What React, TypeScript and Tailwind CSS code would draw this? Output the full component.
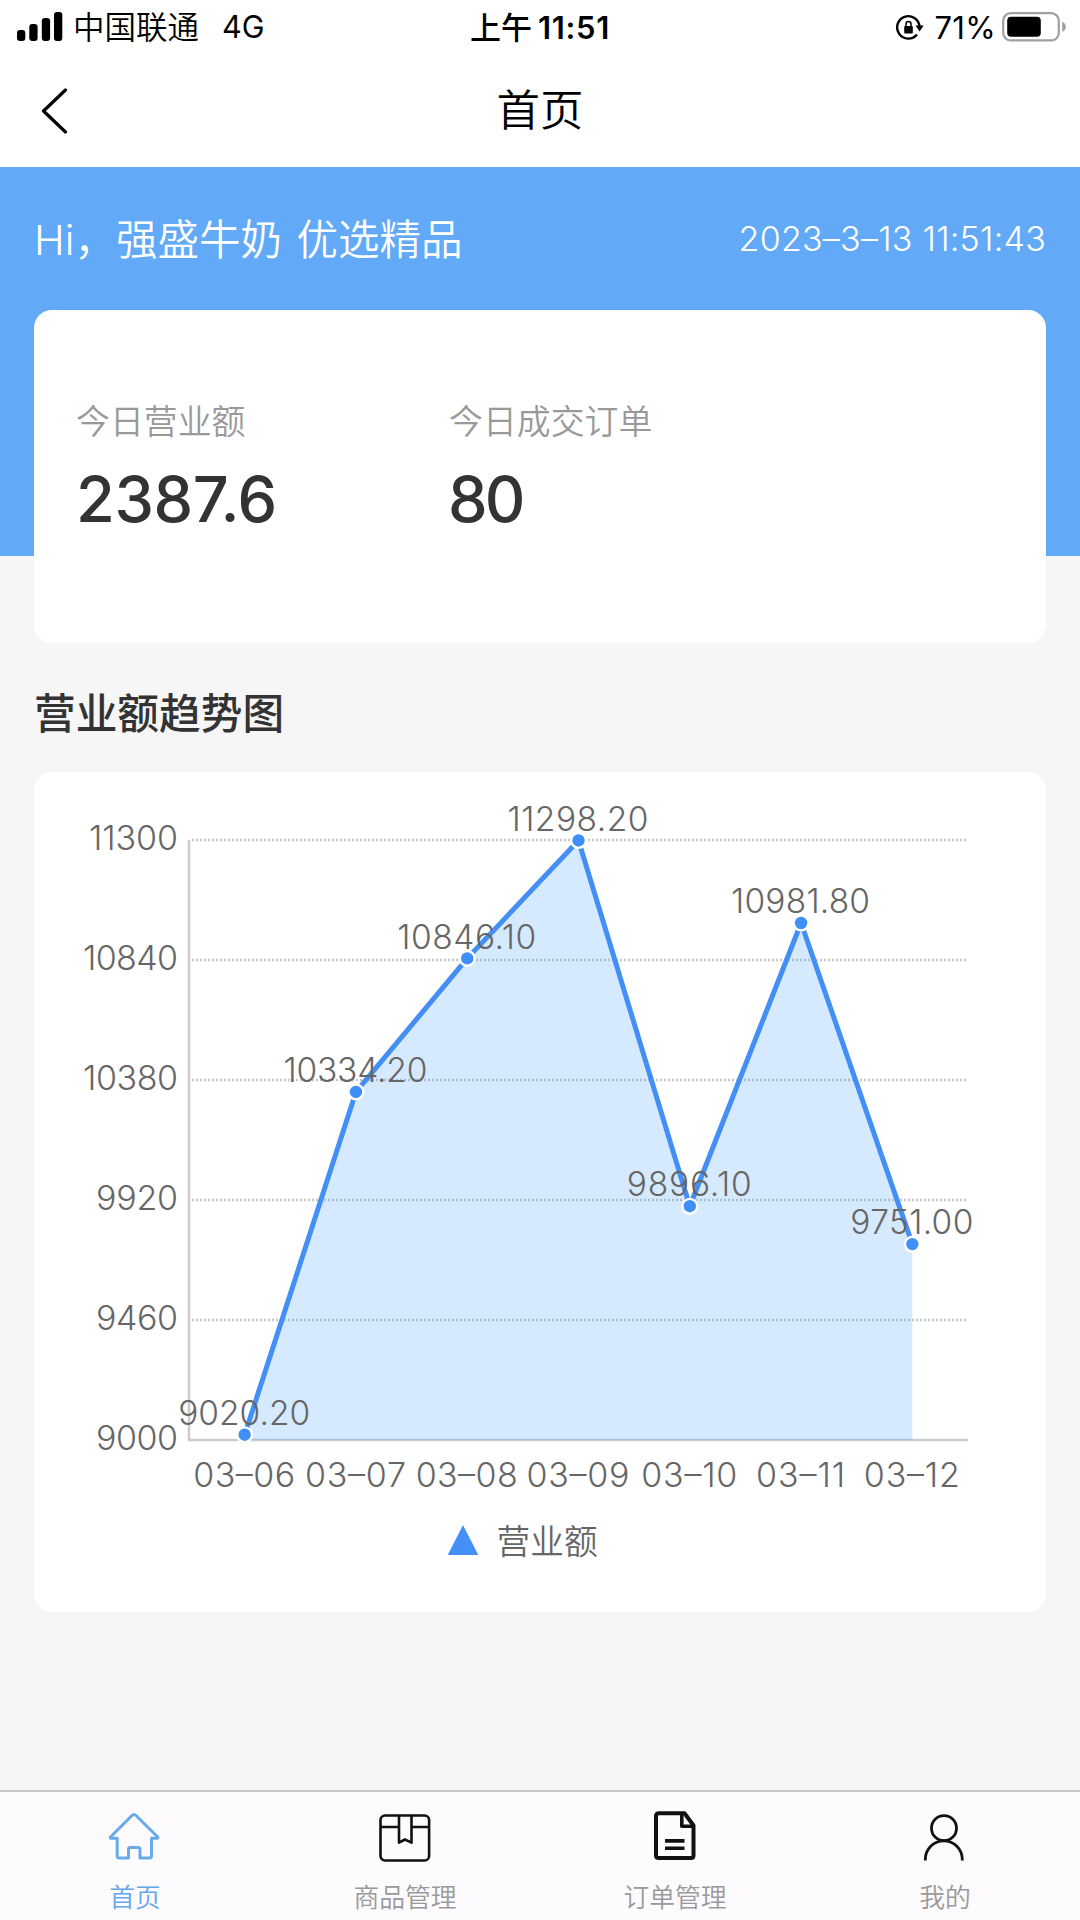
import React from "react";

const points = [
  { day: "03–06", value: 9020.2, width: 129, dayWidth: 99 },
  { day: "03–07", value: 10334.2, width: 141, dayWidth: 98 },
  { day: "03–08", value: 10846.1, width: 136, dayWidth: 99 },
  { day: "03–09", value: 11298.2, width: 138, dayWidth: 100 },
  { day: "03–10", value: 9896.1, width: 122, dayWidth: 93 },
  { day: "03–11", value: 10981.8, width: 136, dayWidth: 86 },
  { day: "03–12", value: 9751, width: 120, dayWidth: 93 },
];
const ticks = [
  { value: 11300, width: 89 },
  { value: 10840, width: 95 },
  { value: 10380, width: 95 },
  { value: 9920, width: 82 },
  { value: 9460, width: 82 },
  { value: 9000, width: 82 },
];

// Plot area inside the 1012 x 840 chart card
const LEFT = 155;
const RIGHT = 934;
const TOP = 68;
const BOTTOM = 668;
const STEP = (RIGHT - LEFT) / points.length;
const px = (i: number) => LEFT + STEP * (i + 0.5);
const py = (v: number) => BOTTOM - ((v - 9000) / 2300) * (BOTTOM - TOP);

function StatusBar() {
  return (
    <div className="grid h-[54px] grid-cols-3 items-center text-[30px] leading-none text-black">
      <div className="flex items-center pl-[17px]">
        <svg width="46" height="30" viewBox="0 0 46 30" fill="#000">
          <rect x="0" y="18" width="8.3" height="11" rx="3" />
          <rect x="12.3" y="12" width="8.3" height="17" rx="3" />
          <rect x="24.8" y="6" width="8.3" height="23" rx="3" />
          <rect x="37" y="0" width="8.3" height="29" rx="3" />
        </svg>
        <span className="ml-[10px] translate-y-px text-[31.5px] font-[350]">中国联通</span>
        <span className="ml-[23px] text-[30.5px] font-[370]">4G</span>
      </div>
      <div className="flex items-center justify-center gap-[6px] font-semibold">
        <span className="text-[31px] font-medium">上午</span>
        <span className="text-[31px] tracking-[0.7px]">11:51</span>
      </div>
      <div className="flex items-center justify-end pr-[14px]">
        <svg width="30" height="28" viewBox="0 0 30 28" fill="none">
          <path d="M24.5 13.5A11.2 11.2 0 1 0 22 21.5" stroke="#000" strokeWidth="2.4" />
          <path d="M20.5 12.5h8.2l-4.1 6z" fill="#000" />
          <rect x="9.2" y="13" width="8.6" height="7.5" rx="1" fill="#000" />
          <path d="M11 13.5v-2.6a2.5 2.5 0 0 1 5 0v2.6" stroke="#000" strokeWidth="1.5" />
        </svg>
        <span className="ml-[10px] text-[31px] font-[370] tracking-[0.3px]">71%</span>
        <svg className="ml-[6px]" width="64" height="30" viewBox="0 0 64 30">
          <rect x="1.2" y="1.2" width="55.6" height="27.2" rx="7.5" fill="none" stroke="#a0a0a0" strokeWidth="2.2" />
          <rect x="5.2" y="4.8" width="33.6" height="20" rx="4" fill="#000" />
          <path d="M60.2 9.8q3.6 1.5 3.6 5t-3.6 5z" fill="#a0a0a0" />
        </svg>
      </div>
    </div>
  );
}

function NavBar() {
  return (
    <div className="grid h-[113px] grid-cols-3 items-center">
      <svg className="ml-[41px]" width="28" height="46" viewBox="0 0 28 46" fill="none">
        <path d="M24.5 2L2.5 23l22 21" stroke="#000" strokeWidth="3.2" strokeLinecap="round" strokeLinejoin="round" />
      </svg>
      <h1 className="text-center text-[43.5px] leading-none font-[350] text-black">首页</h1>
    </div>
  );
}

function Chart() {
  const line = points.map((p, i) => `${px(i)},${py(p.value)}`).join(" ");
  return (
    <svg className="block" width="1012" height="840" viewBox="0 0 1012 840" fontSize="34">
      {ticks.slice(0, -1).map(({ value }) => (
        <line key={value} x1={LEFT + 3} x2={RIGHT} y1={py(value)} y2={py(value)} stroke="#c8c8c8" strokeWidth="2.4" strokeDasharray="2 2" />
      ))}
      <path d={`M${LEFT} ${TOP}V${BOTTOM}H${RIGHT}`} fill="none" stroke="#cccccc" strokeWidth="2.6" />
      <polygon points={`${px(0)},${BOTTOM} ${line} ${px(6)},${BOTTOM}`} fill="#3296ff" fillOpacity="0.2" />
      <polyline points={line} fill="none" stroke="#448ff5" strokeWidth="5" strokeLinejoin="round" />
      {points.map((p, i) => (
        <circle key={p.day} cx={px(i)} cy={py(p.value)} r="7.4" fill="#3f8ff8" stroke="#fff" strokeWidth="2.4" />
      ))}
      <g fill="#666" className="font-[350]">
        {ticks.map((t) => (
          <text key={t.value} x={144} y={py(t.value) + 10} textAnchor="end" textLength={t.width}>
            {t.value}
          </text>
        ))}
        {points.map((p, i) => (
          <text key={p.day} x={px(i) - 0.5} y={py(p.value) - 9.8} textAnchor="middle" fontSize="33.5" textLength={p.width + 3}>
            {p.value.toFixed(2)}
          </text>
        ))}
        {points.map((p, i) => (
          <text key={p.day} x={px(i) - 0.5} y={714.5} textAnchor="middle" textLength={p.dayWidth + 3}>
            {p.day}
          </text>
        ))}
      </g>
      <path d="M429 753l15.3 30h-30.6z" fill="#448ff8" />
      <text x="462.5" y="781.5" fontSize="33.7" fill="#666" className="font-[350]">
        营业额
      </text>
    </svg>
  );
}

const tabs = [
  {
    label: "首页",
    active: true,
    icon: (
      <path
        d="M23 4.500Q25 2.500 27 4.500L48.700 26Q49.500 27.300 48 27.300H42.500V45Q42.500 47 40.500 47H31V38.300Q31 36.500 29 36.500H21.500Q19.500 36.500 19.500 38.300V47H10.200Q8.200 47 8.200 45V27.300H2.300Q0.500 27.300 1.500 26Z"
        stroke="#67abea"
        strokeWidth="3"
        strokeLinejoin="round"
      />
    ),
  },
  {
    label: "商品管理",
    icon: (
      <g stroke="#111" strokeWidth="2.6" strokeLinejoin="round">
        <rect x="1.5" y="4.500" width="48.6" height="45" rx="4.500" />
        <path d="M1.500 16H20M32.500 16H50.100M20 4.500V31.700L25.900 28.500L32.500 31.700V4.500" />
      </g>
    ),
  },
  {
    label: "订单管理",
    icon: (
      <g stroke="#111" strokeWidth="4" strokeLinejoin="round">
        <path d="M10 2.200H35.500L44.500 14.500V44.500Q44.500 47 42 47H10Q7 47 7 44.500V5Q7 2.200 10 2.200Z" />
        <path d="M32.800 3V15.300H44" strokeWidth="3.600" />
        <path d="M16 29.900H35.500M16 37.200H35.500" strokeWidth="3.600" />
      </g>
    ),
  },
  {
    label: "我的",
    icon: (
      <g stroke="#111" strokeWidth="2.8">
        <circle cx="25" cy="17.200" r="12.500" />
        <path d="M6.300 49.500V48.500A18.500 18.700 0 0 1 43.300 48.500V49.500" />
      </g>
    ),
  },
];

export default function App() {
  return (
    <div className="flex h-[1920px] w-[1080px] flex-col overflow-hidden bg-[#f6f6f6] font-['Inter','Noto_Sans_CJK_SC',sans-serif]">
      <header className="bg-white">
        <StatusBar />
        <NavBar />
      </header>

      <section className="h-[389px] shrink-0 bg-[#62aaf7] px-[34px]">
        <div className="flex h-[143px] items-center justify-between pt-px font-[350] text-white">
          <p className="pt-[3px] text-[41.5px] leading-none [word-spacing:3px]">Hi，强盛牛奶 优选精品</p>
          <time className="text-[34px] leading-none font-[340] tracking-[0.25px]">2023–3–13 11:51:43</time>
        </div>
        <div className="grid h-[333px] grid-cols-[372px_1fr] items-start rounded-[18px] bg-white px-[42px] pt-[92px]">
          <div>
            <p className="text-[33.9px] leading-[40px] font-[350] text-[#999]">今日营业额</p>
            <p className="mt-[25px] text-[63px] leading-[64px] font-[480] tracking-[-0.4px] text-[#333]">2387.6</p>
          </div>
          <div>
            <p className="pl-px text-[33.9px] leading-[40px] font-[350] text-[#999]">今日成交订单</p>
            <p className="mt-[25px] text-[63px] leading-[64px] font-[480] tracking-[-3px] text-[#333]">80</p>
          </div>
        </div>
      </section>

      <main className="flex-1 px-[34px] pt-[94px]">
        <h2 className="flex h-[122px] items-center pt-2 text-[41.7px] leading-none font-medium text-[#333]">营业额趋势图</h2>
        <div className="rounded-[18px] bg-white">
          <Chart />
        </div>
      </main>

      <nav className="grid h-[130px] shrink-0 grid-cols-4 border-t-2 border-[#c6c6c6] bg-[#fefbff]">
        {tabs.map((t) => (
          <div key={t.label} className="flex flex-col items-center pt-[19px]">
            <svg width="52" height="52" viewBox="0 0 52 52" fill="none">
              {t.icon}
            </svg>
            <span
              className={
                t.active
                  ? "mt-[20px] text-[25.8px] leading-[30px] font-[350] text-[#62a8ea]"
                  : "mt-[20px] text-[25.8px] leading-[30px] font-[350] text-[#999]"
              }
            >
              {t.label}
            </span>
          </div>
        ))}
      </nav>
    </div>
  );
}
